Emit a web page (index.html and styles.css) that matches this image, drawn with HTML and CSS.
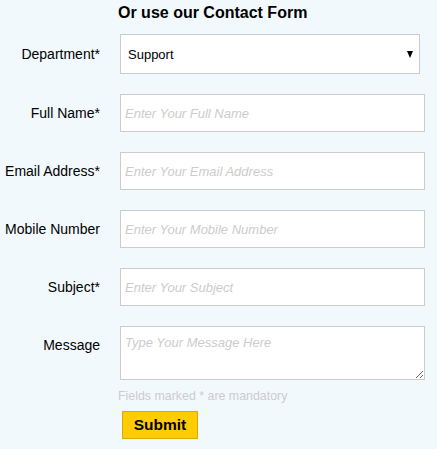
FILE: index.html
```html
<!DOCTYPE html>
<html lang="en">
<head>
    <meta charset="UTF-8">
    <meta name="viewport" content="width=device-width, initial-scale=1.0">
    <title>Contact Form</title>
    <link rel="stylesheet" href="styles.css">
</head>
<body>
    <form class="contact-form" onsubmit="return false;">
        <h2 class="form-title">Or use our Contact Form</h2>

        <div class="form-row">
            <label for="department">Department*</label>
            <div class="select-wrap">
                <select id="department">
                    <option>Support</option>
                    <option>Sales</option>
                    <option>Billing</option>
                </select>
            </div>
        </div>

        <div class="form-row">
            <label for="fullname">Full Name*</label>
            <input type="text" id="fullname" placeholder="Enter Your Full Name">
        </div>

        <div class="form-row">
            <label for="email">Email Address*</label>
            <input type="email" id="email" placeholder="Enter Your Email Address">
        </div>

        <div class="form-row">
            <label for="mobile">Mobile Number</label>
            <input type="text" id="mobile" placeholder="Enter Your Mobile Number">
        </div>

        <div class="form-row">
            <label for="subject">Subject*</label>
            <input type="text" id="subject" placeholder="Enter Your Subject">
        </div>

        <div class="form-row message-row">
            <label for="message">Message</label>
            <textarea id="message" placeholder="Type Your Message Here"></textarea>
        </div>

        <div class="form-footer">
            <p class="note">Fields marked * are mandatory</p>
            <button type="submit" class="submit-btn">Submit</button>
        </div>
    </form>
</body>
</html>
```

FILE: styles.css
```css
html, body {
    margin: 0;
    padding: 0;
    height: 100%;
    background-color: #f2f9fd;
    font-family: "Liberation Sans", Arial, sans-serif;
    color: #000;
}

.contact-form {
    width: 437px;
    padding-top: 3px;
}

.form-title {
    margin: 0 0 11px 118px;
    font-size: 16px;
    line-height: 20px;
    font-weight: bold;
}

.form-row {
    display: flex;
    align-items: flex-start;
    margin-bottom: 20px;
}

.form-row label {
    width: 100px;
    flex-shrink: 0;
    text-align: right;
    font-size: 14px;
    line-height: 18px;
    padding-top: 10px;
    margin-right: 20px;
}

.form-row:first-of-type label {
    padding-top: 11px;
}

.select-wrap {
    position: relative;
    width: 300px;
}

.select-wrap::after {
    content: "";
    position: absolute;
    right: 7px;
    top: 17px;
    border-left: 3.5px solid transparent;
    border-right: 3.5px solid transparent;
    border-top: 7px solid #000;
    pointer-events: none;
}

select {
    -webkit-appearance: none;
    appearance: none;
    width: 300px;
    height: 40px;
    box-sizing: border-box;
    border: 1px solid #ccc;
    border-radius: 0;
    background: #fff;
    padding: 0 7px;
    font-family: inherit;
    font-size: 13px;
    color: #000;
}

input, textarea {
    width: 305px;
    height: 38px;
    box-sizing: border-box;
    border: 1px solid #ccc;
    border-radius: 0;
    background: #fff;
    padding: 0 4px;
    font-family: inherit;
    font-size: 13px;
    color: #000;
    margin: 0;
}

textarea {
    height: 54px;
    padding: 8px 4px;
    resize: both;
}

input::placeholder, textarea::placeholder {
    color: #ccc;
    font-style: italic;
}

.message-row {
    margin-bottom: 0;
}

.form-footer {
    padding-left: 118px;
}

.note {
    margin: 9px 0 8px;
    font-size: 12.4px;
    line-height: 14px;
    color: #ccc;
}

.submit-btn {
    margin-left: 4px;
    height: 28px;
    width: 76px;
    padding: 0;
    background-color: #ffcc00;
    border: 1px solid #dcaa00;
    border-radius: 0;
    font-family: inherit;
    font-size: 15.5px;
    font-weight: bold;
    color: #000;
    cursor: pointer;
}

.submit-btn:hover {
    background-color: #f5c000;
}
```
